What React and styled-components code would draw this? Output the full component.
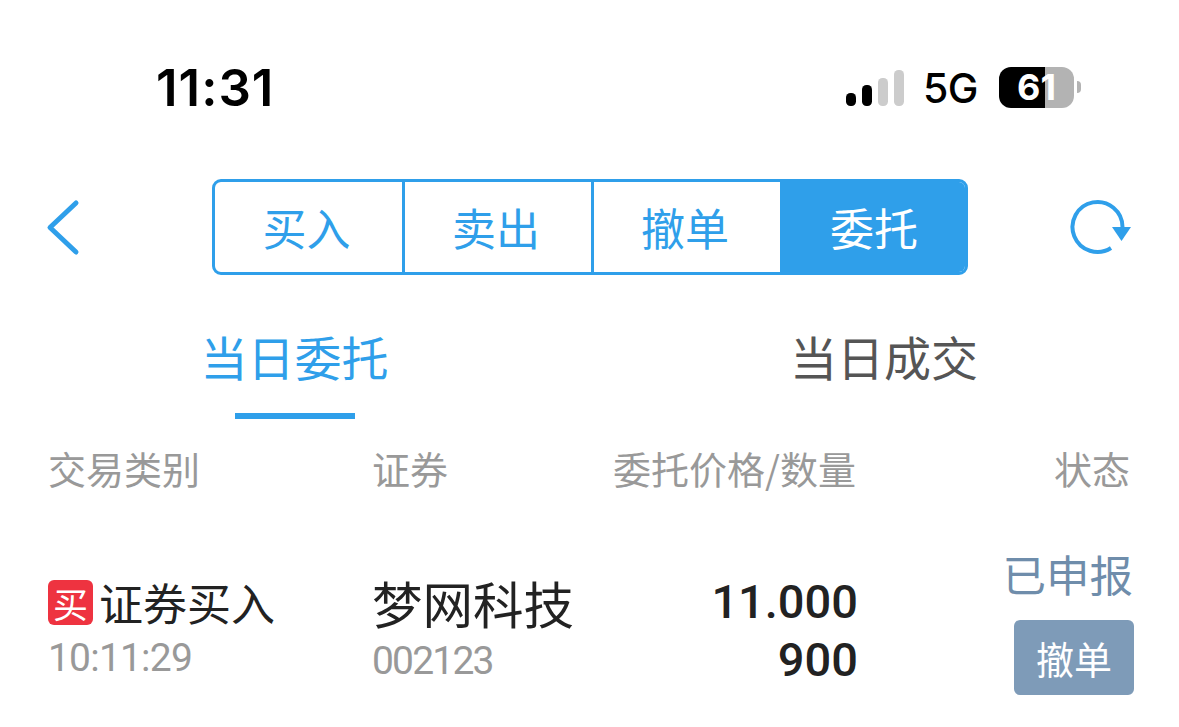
import React from "react";
import styled, { createGlobalStyle } from "styled-components";

const GlobalStyle = createGlobalStyle`
  html, body {
    margin: 0;
    padding: 0;
    background: #fff;
  }
  body {
    font-family: "Noto Sans CJK SC", "Noto Sans", sans-serif;
  }
`;

const BLUE = "#2f9fea";

const Page = styled.div`
  width: 1179px;
  height: 727px;
  overflow: hidden;
  background: #fff;
`;

// status bar
const StatusBar = styled.div`
  height: 179px;
  box-sizing: border-box;
  padding: 57px 98px 0 156px;
  display: flex;
  justify-content: space-between;
  align-items: flex-start;
`;

const Clock = styled.span`
  font-family: Inter, sans-serif;
  font-size: 51px;
  font-weight: 600;
  line-height: 62px;
  letter-spacing: 1px;
  color: #000;
`;

const StatusIcons = styled.div`
  display: flex;
  align-items: center;
  height: 62px;
`;

const Network = styled.span`
  font-family: Inter, sans-serif;
  font-size: 41px;
  font-weight: 500;
  line-height: 62px;
  color: #000;
  margin: 0 21px 0 19px;
  letter-spacing: -0.5px;
`;

const Battery = styled.div`
  width: 75px;
  height: 41px;
  margin-top: -2px;
  border-radius: 12px;
  background: linear-gradient(to right, #000 0, #000 46px, #b3b3b3 46px);
  text-align: center;
  font-family: Inter, sans-serif;
  font-size: 36px;
  font-weight: 700;
  line-height: 41px;
  color: #fff;
`;

const BatteryCap = styled.span`
  width: 4px;
  height: 12px;
  margin: -2px 0 0 3px;
  background: #b3b3b3;
  border-radius: 0 6px 6px 0;
`;

// top nav with segmented tabs
const NavBar = styled.div`
  height: 96px;
  display: flex;
  align-items: center;
  padding-left: 46px;
`;

const Segments = styled.div`
  display: grid;
  grid-template-columns: 187px 189px 189px 1fr;
  box-sizing: border-box;
  width: 756px;
  height: 96px;
  margin: 0 102px 0 130px;
  border: 3px solid ${BLUE};
  border-radius: 9px;
  overflow: hidden;
`;

const Segment = styled.div`
  display: flex;
  align-items: center;
  justify-content: center;
  padding-right: ${({ $active }) => ($active ? "0" : "4px")};
  font-size: 44px;
  font-weight: 400;
  color: ${({ $active }) => ($active ? "#fff" : BLUE)};
  background: ${({ $active }) => ($active ? BLUE : "transparent")};
  border-left: ${({ $first }) => ($first ? "none" : `3px solid ${BLUE}`)};
`;

// second level tabs
const SubTabs = styled.div`
  display: grid;
  grid-template-columns: 589px 590px;
  height: 144px;
`;

const SubTab = styled.div`
  position: relative;
  display: flex;
  justify-content: center;
  padding-top: 44px;
  font-size: 47px;
  font-weight: 400;
  line-height: 74px;
  color: ${({ $active }) => ($active ? BLUE : "#555")};
  &::after {
    content: "";
    display: ${({ $active }) => ($active ? "block" : "none")};
    position: absolute;
    left: 235px;
    top: 138px;
    width: 120px;
    height: 6px;
    background: ${BLUE};
  }
`;

const Columns = styled.div`
  display: grid;
  grid-template-columns: 324px 200px 284px 1fr;
  padding: 0 49px 0 48px;
`;

const HeadRow = styled(Columns)`
  height: 50px;
  margin-top: 24px;
  align-items: center;
  font-size: 38px;
  font-weight: 400;
  line-height: 50px;
  color: #999;
`;

const HeadCell = styled.div`
  text-align: ${({ $align }) => $align || "left"};
  white-space: nowrap;
`;

const DataRow = styled(Columns)`
  padding-top: 86px;
`;

const TypeLine = styled.div`
  display: flex;
  align-items: center;
  gap: 6px;
  height: 46px;
  font-size: 44px;
  font-weight: 400;
  color: #222;
  white-space: nowrap;
`;

const BuyBadge = styled.span`
  width: 45px;
  height: 45px;
  border-radius: 6px;
  background: #ee3340;
  color: #fff;
  font-size: 35px;
  font-weight: 400;
  line-height: 45px;
  text-align: center;
`;

const DigitsLabel = styled.div`
  font-family: Roboto, sans-serif;
  font-size: 39px;
  font-weight: 400;
  line-height: 44px;
  color: #999;
`;

const TimeLabel = styled(DigitsLabel)`
  margin-top: 11px;
  letter-spacing: -0.8px;
`;

const StockName = styled.div`
  font-size: 50.5px;
  font-weight: 400;
  line-height: 62px;
  color: #222;
  white-space: nowrap;
  margin-top: -8px;
`;

const CodeLabel = styled(DigitsLabel)`
  margin-top: 6px;
  letter-spacing: -1.8px;
`;

const PriceCell = styled.div`
  display: flex;
  flex-direction: column;
  align-items: flex-end;
  font-family: Roboto, sans-serif;
  font-size: 47px;
  font-weight: 500;
  line-height: 58px;
  color: #222;
  margin: -6px -2px 0 0;
`;

const StatusCell = styled.div`
  display: flex;
  flex-direction: column;
  align-items: flex-end;
  margin-top: -35px;
`;

const StatusText = styled.div`
  font-size: 43.5px;
  font-weight: 400;
  line-height: 60px;
  color: #6f8dab;
  white-space: nowrap;
  margin-right: -3px;
`;

const CancelButton = styled.button`
  width: 120px;
  height: 75px;
  margin-top: 16px;
  margin-right: -4px;
  border: none;
  border-radius: 6px;
  background: #7e9bb8;
  color: #fff;
  font-family: inherit;
  font-size: 38px;
  font-weight: 400;
  padding: 0;
`;

function BackIcon() {
  return (
    <svg width="36" height="60" viewBox="0 0 36 60" fill="none">
      <path d="M30 6 L4 30.5 L30 55" stroke={BLUE} strokeWidth="5" strokeLinecap="round" strokeLinejoin="round" />
    </svg>
  );
}

function RefreshIcon() {
  return (
    <svg width="62" height="60" viewBox="0 0 62 60" fill="none">
      <path d="M52.5 30 A25 25 0 1 0 41 51" stroke={BLUE} strokeWidth="4" />
      <path d="M42 30 H61 L51.5 44 Z" fill={BLUE} />
    </svg>
  );
}

function SignalIcon() {
  return (
    <svg width="58" height="36" viewBox="0 0 58 36">
      <rect x="0" y="23" width="10" height="13" rx="4.5" fill="#000" />
      <rect x="16" y="15" width="10" height="21" rx="4.5" fill="#000" />
      <rect x="32" y="8" width="10" height="28" rx="4.5" fill="#ccc" />
      <rect x="48" y="0" width="10" height="36" rx="4.5" fill="#ccc" />
    </svg>
  );
}

export default function App() {
  return (
    <Page>
      <GlobalStyle />
      <StatusBar>
        <Clock>11:31</Clock>
        <StatusIcons>
          <SignalIcon />
          <Network>5G</Network>
          <Battery>61</Battery>
          <BatteryCap />
        </StatusIcons>
      </StatusBar>

      <NavBar>
        <BackIcon />
        <Segments>
          <Segment $first>买入</Segment>
          <Segment>卖出</Segment>
          <Segment>撤单</Segment>
          <Segment $active>委托</Segment>
        </Segments>
        <RefreshIcon />
      </NavBar>

      <SubTabs>
        <SubTab $active>当日委托</SubTab>
        <SubTab>当日成交</SubTab>
      </SubTabs>

      <HeadRow>
        <HeadCell>交易类别</HeadCell>
        <HeadCell>证券</HeadCell>
        <HeadCell $align="right">委托价格/数量</HeadCell>
        <HeadCell $align="right">状态</HeadCell>
      </HeadRow>

      <DataRow>
        <div>
          <TypeLine>
            <BuyBadge>买</BuyBadge>
            证券买入
          </TypeLine>
          <TimeLabel>10:11:29</TimeLabel>
        </div>
        <div>
          <StockName>梦网科技</StockName>
          <CodeLabel>002123</CodeLabel>
        </div>
        <PriceCell>
          <span>11.000</span>
          <span>900</span>
        </PriceCell>
        <StatusCell>
          <StatusText>已申报</StatusText>
          <CancelButton>撤单</CancelButton>
        </StatusCell>
      </DataRow>
    </Page>
  );
}
